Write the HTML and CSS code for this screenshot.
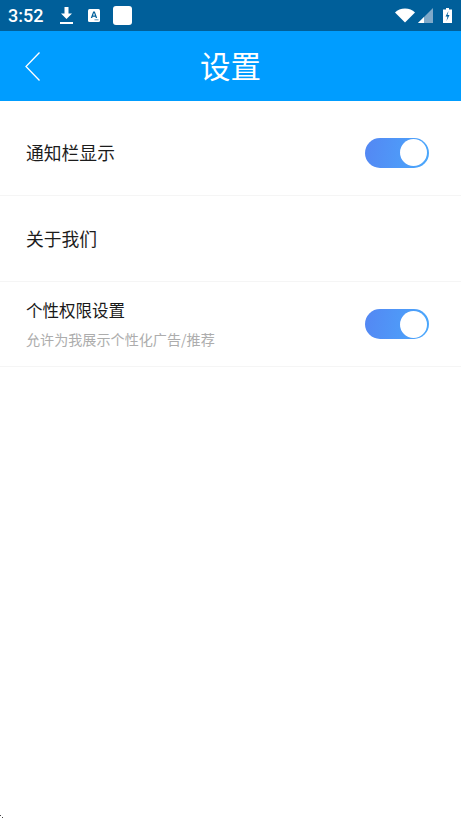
FILE: index.html
```html
<!DOCTYPE html>
<html lang="zh-CN">
<head>
<meta charset="utf-8">
<title>设置</title>
<link rel="stylesheet" href="styles.css">
</head>
<body>
<div class="page">
  <div class="statusbar">
    <span class="time">3:52</span>
    <svg class="ic-download" viewBox="0 0 13 17" width="13" height="17"><path d="M4.500 0h4v6.500H12L6.500 12 1 6.500h3.500z" fill="#fff"/><rect x="0" y="15" width="13" height="2" fill="#fff"/></svg>
    <svg class="ic-a" viewBox="0 0 12 13" width="12" height="13"><rect width="12" height="13" rx="1.500" fill="#fff"/><path d="M2.800 9 5.200 2.500h1.600L9.200 9H7.800l-.4-1.300H4.600L4.200 9zM5 6.500h2L6 3.800z" fill="#005f9a"/><rect x="6.500" y="10.300" width="4" height="1" fill="#5f9cc4"/></svg>
    <span class="ic-square"></span>
    <span class="spacer"></span>
    <svg class="ic-wifi" viewBox="0 0 20 15" width="20" height="15"><path d="M0 4.500C2.500 2 6 0.500 10 0.500S17.500 2 20 4.500L10 14.500z" fill="#fff"/></svg>
    <svg class="ic-signal" viewBox="0 0 15 15" width="15" height="15"><path d="M15 0V15H0z" fill="#7fa9c9"/><path d="M6 9V15H0z" fill="#fff"/></svg>
    <svg class="ic-battery" viewBox="0 0 9 15" width="9" height="15"><path d="M3 0h3v1.500h3V15H0V1.500h3z" fill="#fff"/><path d="M5.500 3 2.500 8.500h2L3.500 13l3-6h-2z" fill="#005f9a"/></svg>
  </div>
  <header class="topbar">
    <svg class="back" viewBox="0 0 15 29" width="15" height="29"><path d="M14.500 .5 1 14.500 14.500 28.500" fill="none" stroke="#fff" stroke-width="1.300"/></svg>
    <h1 class="title">设置</h1>
  </header>
  <main class="list">
    <div class="row row-a">
      <span class="label">通知栏显示</span>
      <span class="toggle"><span class="knob"></span></span>
    </div>
    <div class="row row-b">
      <span class="label">关于我们</span>
    </div>
    <div class="row row-c">
      <div class="stack">
        <span class="label-sm">个性权限设置</span>
        <span class="sub">允许为我展示个性化广告/推荐</span>
      </div>
      <span class="toggle"><span class="knob"></span></span>
    </div>
  </main>
  <span class="corner-dot"></span>
</div>
</body>
</html>
```

FILE: styles.css
```css
* { box-sizing: border-box; }
html, body { margin: 0; padding: 0; background: #fff; }
body { font-family: "Noto Sans CJK SC", "Noto Sans", sans-serif; }
.page { width: 461px; height: 819px; overflow: hidden; display: flex; flex-direction: column; position: relative; }
.statusbar { height: 31px; background: #005f9a; display: flex; align-items: center; padding: 0 9px 1px 8px; color: #fff; flex: none; }
.time { font-family: Roboto, sans-serif; font-size: 18px; font-weight: 500; line-height: 31px; width: 52px; margin-top: 1px; }
.ic-a { margin-left: 15px; }
.ic-square { width: 19px; height: 19px; background: #fff; border-radius: 3px; margin-left: 13px; }
.spacer { flex: 1; }
.ic-wifi { margin-right: 3px; }
.ic-signal { margin-right: 10px; }
.topbar { height: 70px; background: #009dff; display: flex; align-items: center; justify-content: center; position: relative; flex: none; }
.back { position: absolute; left: 25px; top: 21px; }
.title { margin: 0 0 2px; font-size: 30.500px; font-weight: 400; color: #fff; line-height: 68px; }
.row { display: flex; align-items: center; justify-content: space-between; padding: 0 32px 0 26px; border-bottom: 1px solid #f5f5f5; }
.row-a { height: 95px; padding-top: 9px; }
.row-a .label { margin-bottom: 2px; }
.row-b { height: 86px; padding-bottom: 2px; }
.row-c { height: 85px; }
.label { font-size: 17.800px; color: #1c1c1c; line-height: 26px; }
.stack { display: flex; flex-direction: column; gap: 7px; margin-bottom: 2px; }
.label-sm { font-size: 16.500px; color: #1a1a1a; line-height: 24px; }
.sub { font-size: 14.100px; color: #adadad; line-height: 20px; }
.toggle { width: 64px; height: 30px; border-radius: 15px; background: linear-gradient(100deg, #5487f3, #4aa8fc); padding: 1.500px 2px; display: flex; justify-content: flex-end; }
.knob { width: 27px; height: 27px; border-radius: 50%; background: #fff; }
.corner-dot { position: absolute; left: 0; top: 815px; width: 1px; height: 1px; background: #444; box-shadow: 2px 2px 0 #444; }
```
